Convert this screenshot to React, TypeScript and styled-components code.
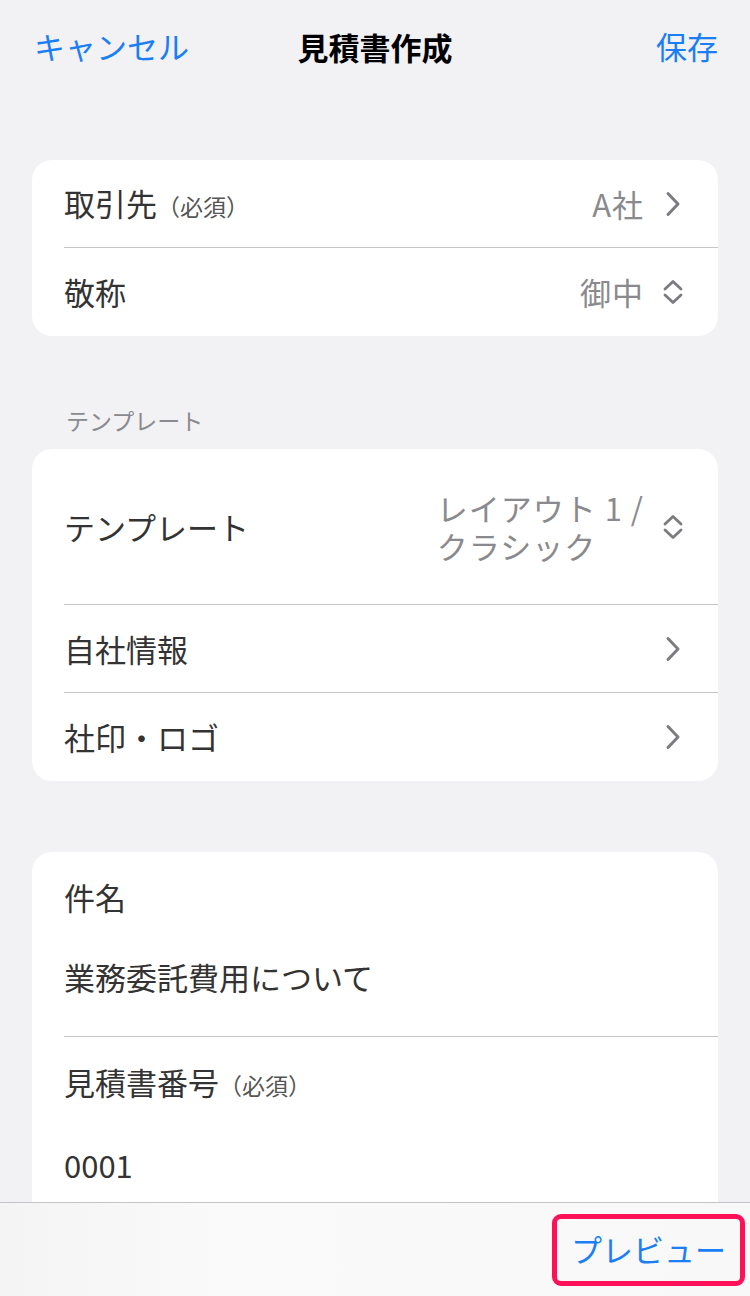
import * as React from 'react';
import styled, { createGlobalStyle } from 'styled-components';

const blue = '#1a7ff5';
const gray = '#8a8a8e';

const GlobalStyle = createGlobalStyle`
  html, body {
    margin: 0;
    padding: 0;
    background: #f2f1f4;
    font-family: "Noto Sans CJK JP", "Noto Sans", sans-serif;
  }
`;

const Screen = styled.div`
  height: 100vh;
  display: flex;
  flex-direction: column;
  overflow: hidden;
  background: #f2f1f4;
`;

const NavBar = styled.header`
  flex: 0 0 92px;
  display: flex;
  align-items: center;
  justify-content: space-between;
  padding: 0 32px 0 34px;
  position: relative;
`;

const NavButton = styled.span`
  font-size: 31px;
  color: ${blue};
  line-height: 40px;
`;

const NavTitle = styled.h1`
  position: absolute;
  left: 0;
  right: 0;
  margin: 0;
  text-align: center;
  font-size: 31px;
  font-weight: 700;
  color: #000;
  pointer-events: none;
`;

const Content = styled.main`
  flex: 1;
  min-height: 0;
  overflow: hidden;
  padding: 68px 32px 0;
  display: flex;
  flex-direction: column;
`;

const Card = styled.section<{ $gap?: number }>`
  flex-shrink: 0;
  background: #fff;
  border-radius: 20px;
  overflow: hidden;
  margin-bottom: ${p => p.$gap ?? 0}px;
`;

const SectionLabel = styled.div`
  flex-shrink: 0;
  font-size: 23px;
  color: ${gray};
  padding: 0 0 13px 34px;
  line-height: 32px;
`;

const Row = styled.div<{ $height: number; $divider?: boolean }>`
  height: ${p => p.$height}px;
  display: flex;
  align-items: center;
  padding: 0 34px 0 32px;
  position: relative;
  ${p => p.$divider && `
    &::after {
      content: '';
      position: absolute;
      left: 32px;
      right: 0;
      bottom: 0;
      height: 1px;
      background: #c6c6c8;
    }
  `}
`;

const Label = styled.span`
  flex: 1;
  font-size: 31px;
  color: #333;
  line-height: 40px;
`;

const Required = styled.span`
  font-size: 23px;
  color: #555;
`;

const Value = styled.span`
  font-size: 31px;
  color: ${gray};
  line-height: 38px;
  margin-right: 18px;
  letter-spacing: 1px;
  text-align: left;
`;

const Field = styled.div<{ $divider?: boolean; $bottom: number }>`
  display: flex;
  flex-direction: column;
  gap: 40px;
  padding: 25px 32px ${p => p.$bottom}px;
  position: relative;
  ${p => p.$divider && `
    &::after {
      content: '';
      position: absolute;
      left: 32px;
      right: 0;
      bottom: 0;
      height: 1px;
      background: #c6c6c8;
    }
  `}
`;

const FieldText = styled.span`
  font-size: 31px;
  color: #333;
  line-height: 40px;
`;

const Toolbar = styled.footer`
  flex: 0 0 94px;
  box-sizing: border-box;
  border-top: 1px solid #c4c4c6;
  background: linear-gradient(90deg, #f4f4f4 0%, #fafafa 30%, #f8f8f8 100%);
  display: flex;
  justify-content: flex-end;
  align-items: flex-start;
  padding: 11px 5px 0 0;
`;

const PreviewButton = styled.button`
  width: 193px;
  height: 72px;
  box-sizing: border-box;
  border: 5px solid #ff1059;
  border-radius: 9px;
  background: transparent;
  color: ${blue};
  font-family: inherit;
  font-size: 31px;
  padding: 0 0 4px;
  display: flex;
  align-items: center;
  justify-content: center;
`;

const Chevron = () => (
  <svg width="22" height="28" viewBox="0 0 22 28" fill="none">
    <path d="M6 3.5 L16 14 L6 24.5" stroke="#7c7c80" strokeWidth="3" strokeLinecap="round" strokeLinejoin="round" />
  </svg>
);

const UpDown = () => (
  <svg width="22" height="28" viewBox="0 0 22 28" fill="none">
    <path d="M3 11 L11 3.5 L19 11 M3 17 L11 24.5 L19 17" stroke="#7c7c80" strokeWidth="2.8" strokeLinecap="round" strokeLinejoin="round" />
  </svg>
);

export default function App() {
  return (
    <Screen>
      <GlobalStyle />
      <NavBar>
        <NavButton>キャンセル</NavButton>
        <NavTitle>見積書作成</NavTitle>
        <NavButton>保存</NavButton>
      </NavBar>
      <Content>
        <Card $gap={68}>
          <Row $height={88} $divider>
            <Label>取引先<Required>（必須）</Required></Label>
            <Value>A社</Value>
            <Chevron />
          </Row>
          <Row $height={88}>
            <Label>敬称</Label>
            <Value>御中</Value>
            <UpDown />
          </Row>
        </Card>
        <SectionLabel>テンプレート</SectionLabel>
        <Card $gap={71}>
          <Row $height={156} $divider>
            <Label>テンプレート</Label>
            <Value>レイアウト 1 /<br />クラシック</Value>
            <UpDown />
          </Row>
          <Row $height={88} $divider>
            <Label>自社情報</Label>
            <Chevron />
          </Row>
          <Row $height={88}>
            <Label>社印・ロゴ</Label>
            <Chevron />
          </Row>
        </Card>
        <Card>
          <Field $divider $bottom={40}>
            <FieldText>件名</FieldText>
            <FieldText>業務委託費用について</FieldText>
          </Field>
          <Field $bottom={40}>
            <FieldText>見積書番号<Required>（必須）</Required></FieldText>
            <FieldText>0001</FieldText>
          </Field>
        </Card>
      </Content>
      <Toolbar>
        <PreviewButton>プレビュー</PreviewButton>
      </Toolbar>
    </Screen>
  );
}
